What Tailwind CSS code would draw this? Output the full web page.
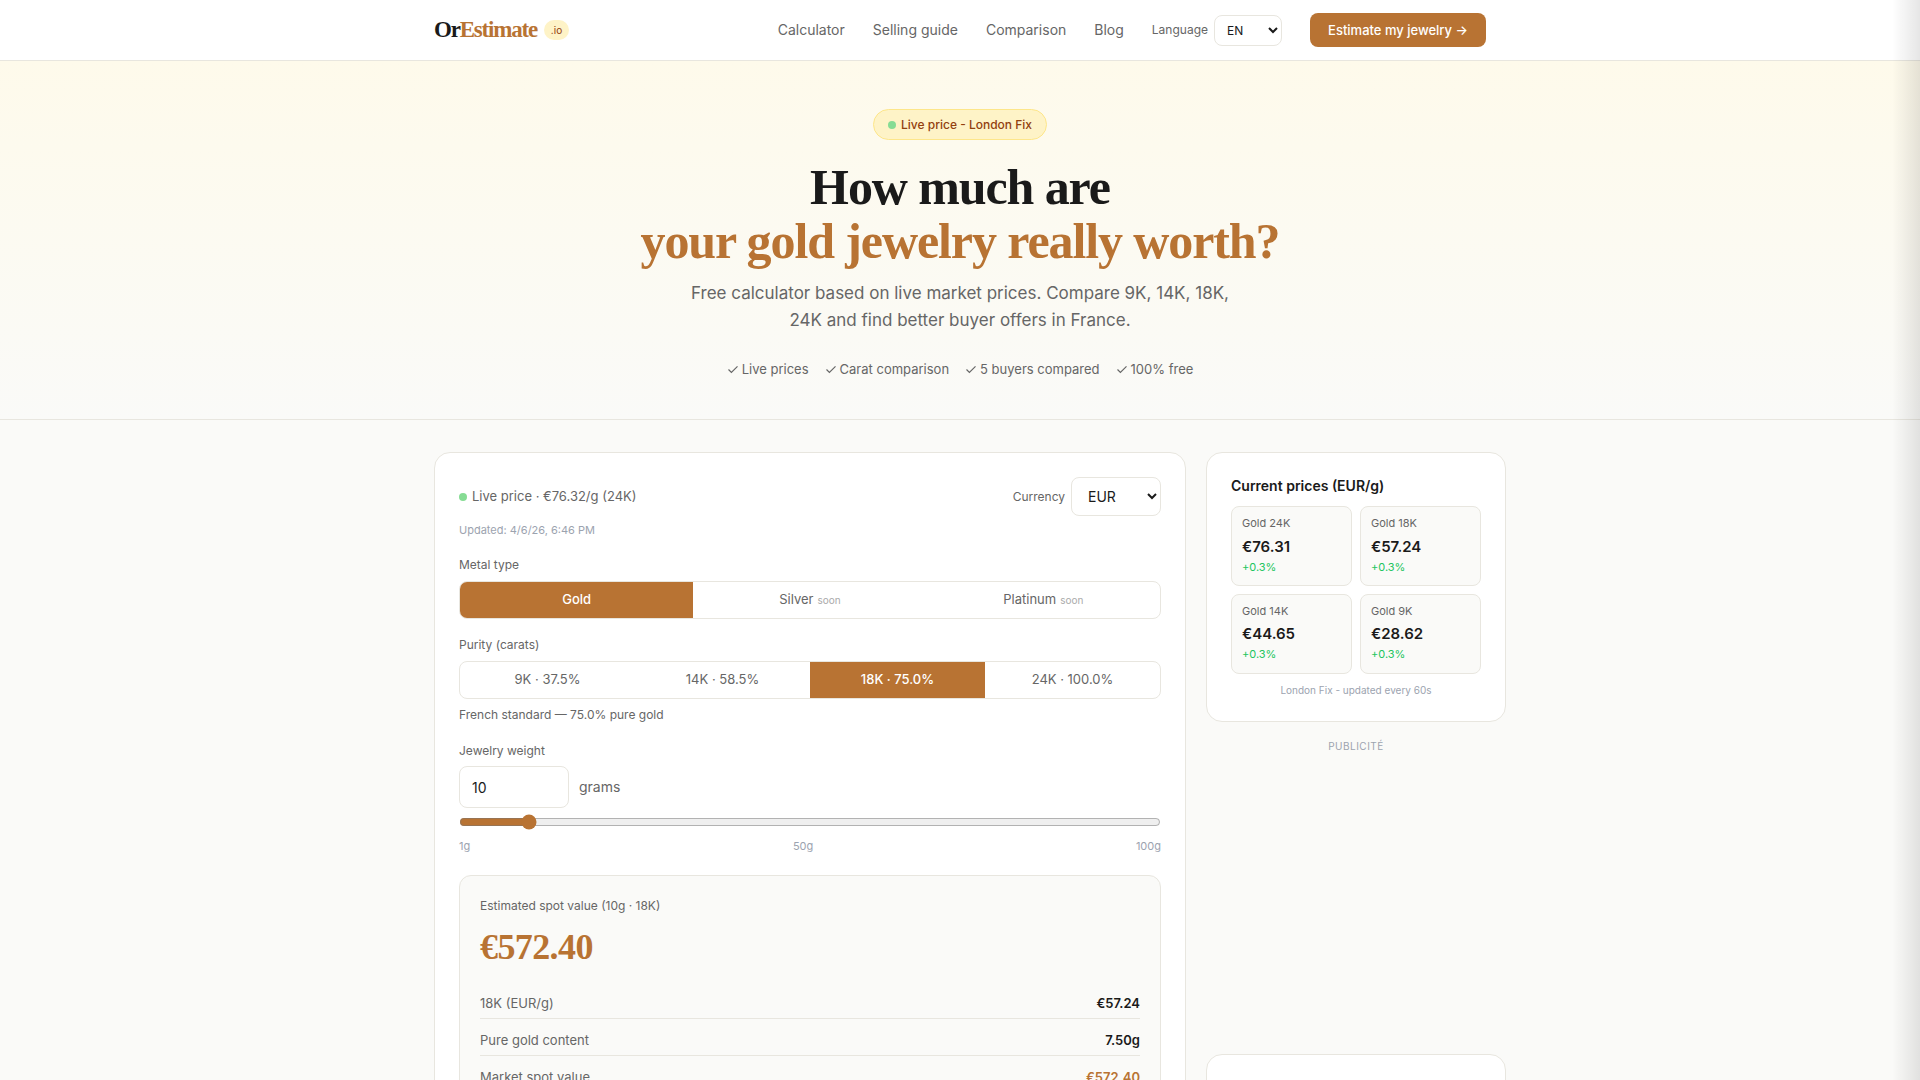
<!DOCTYPE html>
<html lang="en">
<head>
    <meta charset="UTF-8">
    <meta name="viewport" content="width=device-width, initial-scale=1.0">
    <title>OrEstimate.io</title>
    <script src="https://cdn.jsdelivr.net/npm/@tailwindcss/browser@4"></script>
</head>
<body class="relative h-[1080px] overflow-hidden bg-[#fafaf8] font-['Inter',sans-serif] text-[#1a1a1a]">
    <!-- nav -->
    <header class="h-[61px] bg-white border-b border-[#e8e6df]">
        <div class="w-[1052px] h-[60px] mx-auto flex items-center justify-between">
            <div class="flex items-center gap-[7px]">
                <span class="font-['Liberation_Serif',serif] font-bold text-[23px] tracking-[-1.2px]">Or<span class="text-[#b87333]">Estimate</span></span>
                <span class="w-[25px] h-[20px] rounded-full bg-[#fef3c7] text-[#92400e] text-[10px] flex items-center justify-center">.io</span>
            </div>
            <nav class="flex items-center text-sm text-[#666]">
                <a class="mr-7">Calculator</a>
                <a class="mr-7">Selling guide</a>
                <a class="mr-7">Comparison</a>
                <a class="mr-7">Blog</a>
                <span class="text-xs mr-[6px]">Language</span>
                <select class="w-[68px] h-[31px] pl-2 bg-white border border-[#e8e6df] rounded-lg text-xs text-[#1a1a1a] mr-7">
                    <option>EN</option>
                </select>
                <button class="w-[176px] h-[34px] bg-[#b87333] text-white text-[13px] font-medium rounded-lg">Estimate my jewelry →</button>
            </nav>
        </div>
    </header>

    <!-- hero -->
    <section class="h-[359px] bg-gradient-to-b from-[#fefaeb] to-[#fafaf8] border-b border-[#e8e6df] flex flex-col items-center pt-12">
        <div class="h-[31px] px-[14px] flex items-center gap-[5px] rounded-full bg-[#fef3c7] border border-[#fde68a] text-xs font-medium text-[#92400e]">
            <span class="w-2 h-2 rounded-full bg-[#86dc94]"></span>
            Live price - London Fix
        </div>
        <h1 class="mt-5 font-['Liberation_Serif',serif] font-bold text-[50px] leading-[54px] tracking-[-1.1px] text-center">
            How much are<br>
            <span class="text-[#b87333]">your gold jewelry really worth?</span>
        </h1>
        <p class="mt-3 w-[560px] text-[17px] leading-[27px] text-center text-[#666]">Free calculator based on live market prices. Compare 9K, 14K, 18K,<br>24K and find better buyer offers in France.</p>
        <div class="mt-[25px] flex gap-4 text-[13px] leading-5 text-[#666]">
            <span class="flex items-center gap-[3px]"><svg class="w-3 h-3" viewBox="0 0 12 12" fill="none" stroke="#666" stroke-width="1.2"><path d="M1.5 6.5l2.9 2.9L10.5 3.3"/></svg>Live prices</span>
            <span class="flex items-center gap-[3px]"><svg class="w-3 h-3" viewBox="0 0 12 12" fill="none" stroke="#666" stroke-width="1.2"><path d="M1.5 6.5l2.9 2.9L10.5 3.3"/></svg>Carat comparison</span>
            <span class="flex items-center gap-[3px]"><svg class="w-3 h-3" viewBox="0 0 12 12" fill="none" stroke="#666" stroke-width="1.2"><path d="M1.5 6.5l2.9 2.9L10.5 3.3"/></svg>5 buyers compared</span>
            <span class="flex items-center gap-[3px]"><svg class="w-3 h-3" viewBox="0 0 12 12" fill="none" stroke="#666" stroke-width="1.2"><path d="M1.5 6.5l2.9 2.9L10.5 3.3"/></svg>100% free</span>
        </div>
    </section>

    <!-- main -->
    <main class="ml-[434px] mt-8 w-[1072px] flex gap-5 items-start">
        <div class="w-[752px] shrink-0 bg-white border border-[#e8e6df] rounded-2xl p-6">
            <div class="flex items-center justify-between">
                <div class="flex items-center gap-[5px] text-[13px] text-[#666]">
                    <span class="w-2 h-2 rounded-full bg-[#86dc94]"></span>
                    Live price · €76.32/g (24K)
                </div>
                <div class="flex items-center gap-[6px]">
                    <span class="text-xs text-[#666]">Currency</span>
                    <select class="w-[90px] h-[39px] pl-3 bg-white border border-[#e8e6df] rounded-lg text-sm text-[#1a1a1a]">
                        <option>EUR</option>
                    </select>
                </div>
            </div>
            <p class="mt-[6px] text-[11px] leading-4 text-[#9ca3af]">Updated: 4/6/26, 6:46 PM</p>

            <p class="mt-[19px] text-xs leading-4 text-[#666]">Metal type</p>
            <div class="mt-2 h-[38px] grid grid-cols-3 border border-[#e8e6df] rounded-lg overflow-hidden text-[13px] text-[#666]">
                <div class="bg-[#b87333] text-white font-medium flex items-center justify-center">Gold</div>
                <div class="flex items-center justify-center gap-1">Silver <span class="text-[10px] text-[#aaa]">soon</span></div>
                <div class="flex items-center justify-center gap-1">Platinum <span class="text-[10px] text-[#aaa]">soon</span></div>
            </div>

            <p class="mt-[18px] text-xs leading-4 text-[#666]">Purity (carats)</p>
            <div class="mt-2 h-[38px] grid grid-cols-4 border border-[#e8e6df] rounded-lg overflow-hidden text-[13px] text-[#666]">
                <div class="flex items-center justify-center">9K · 37.5%</div>
                <div class="flex items-center justify-center">14K · 58.5%</div>
                <div class="bg-[#b87333] text-white font-medium flex items-center justify-center">18K · 75.0%</div>
                <div class="flex items-center justify-center">24K · 100.0%</div>
            </div>
            <p class="mt-2 text-xs leading-4 text-[#666]">French standard — 75.0% pure gold</p>

            <p class="mt-5 text-xs leading-4 text-[#666]">Jewelry weight</p>
            <div class="mt-[7px] flex items-center gap-[10px]">
                <input type="number" value="10" class="w-[110px] h-[42px] px-3 bg-white border border-[#e8e6df] rounded-lg text-sm text-[#1a1a1a]">
                <span class="text-sm text-[#666]">grams</span>
            </div>
            <input type="range" min="1" max="100" value="10" class="block w-full mt-[6px] accent-[#b87333]">
            <div class="mt-2 flex justify-between text-[11px] leading-4 text-[#9ca3af]">
                <span>1g</span><span>50g</span><span>100g</span>
            </div>

            <div class="mt-[21px] h-[300px] bg-[#fafaf8] border border-[#e8e6df] rounded-xl px-5 pt-[22px]">
                <p class="text-xs leading-4 text-[#666]">Estimated spot value (10g · 18K)</p>
                <p class="mt-[9px] font-['Liberation_Serif',serif] font-bold text-[36px] leading-[48px] tracking-[-0.6px] text-[#b87333]">€572.40</p>
                <div class="mt-[11px] h-[37px] pt-[7px] flex items-center justify-between border-b border-[#e8e6df] text-[13px] text-[#666]">
                    <span>18K (EUR/g)</span><span class="font-semibold text-[#1a1a1a]">€57.24</span>
                </div>
                <div class="h-[37px] pt-2 flex items-center justify-between border-b border-[#e8e6df] text-[13px] text-[#666]">
                    <span>Pure gold content</span><span class="font-semibold text-[#1a1a1a]">7.50g</span>
                </div>
                <div class="h-[37px] pt-[6px] flex items-center justify-between text-[13px] text-[#666]">
                    <span>Market spot value</span><span class="font-semibold text-[#b87333]">€572.40</span>
                </div>
            </div>
        </div>

        <!-- sidebar -->
        <aside class="w-[300px] shrink-0">
            <div class="h-[270px] bg-white border border-[#e8e6df] rounded-2xl p-6">
                <h3 class="text-sm leading-[18px] font-semibold">Current prices (EUR/g)</h3>
                <div class="mt-[11px] grid grid-cols-2 gap-2">
                    <div class="h-[80px] bg-[#fafaf8] border border-[#e8e6df] rounded-lg px-[10px] pt-[9px]">
                        <p class="text-[11px] leading-[14px] text-[#666]">Gold 24K</p>
                        <p class="mt-[7px] text-[15px] leading-[20px] font-semibold">€76.31</p>
                        <p class="mt-[3px] text-[11px] leading-[14px] text-[#22c55e]">+0.3%</p>
                    </div>
                    <div class="h-[80px] bg-[#fafaf8] border border-[#e8e6df] rounded-lg px-[10px] pt-[9px]">
                        <p class="text-[11px] leading-[14px] text-[#666]">Gold 18K</p>
                        <p class="mt-[7px] text-[15px] leading-[20px] font-semibold">€57.24</p>
                        <p class="mt-[3px] text-[11px] leading-[14px] text-[#22c55e]">+0.3%</p>
                    </div>
                    <div class="h-[80px] bg-[#fafaf8] border border-[#e8e6df] rounded-lg px-[10px] pt-[9px]">
                        <p class="text-[11px] leading-[14px] text-[#666]">Gold 14K</p>
                        <p class="mt-[6px] text-[15px] leading-[20px] font-semibold">€44.65</p>
                        <p class="mt-[3px] text-[11px] leading-[14px] text-[#22c55e]">+0.3%</p>
                    </div>
                    <div class="h-[80px] bg-[#fafaf8] border border-[#e8e6df] rounded-lg px-[10px] pt-[9px]">
                        <p class="text-[11px] leading-[14px] text-[#666]">Gold 9K</p>
                        <p class="mt-[6px] text-[15px] leading-[20px] font-semibold">€28.62</p>
                        <p class="mt-[3px] text-[11px] leading-[14px] text-[#22c55e]">+0.3%</p>
                    </div>
                </div>
                <p class="mt-[9px] text-[10px] leading-[14px] text-center text-[#9ca3af]">London Fix - updated every 60s</p>
            </div>
            <p class="mt-[17px] text-[10px] leading-[14px] tracking-[0.5px] text-center text-[#9ca3af]">PUBLICITÉ</p>
            <div class="mt-[301px] h-[200px] bg-white border border-[#e8e6df] rounded-2xl"></div>
        </aside>
    </main>

    <!-- shadow of the closed side drawer -->
    <div class="absolute top-0 right-0 w-[28px] h-[1080px] bg-gradient-to-r from-transparent to-black/10"></div>
</body>
</html>
